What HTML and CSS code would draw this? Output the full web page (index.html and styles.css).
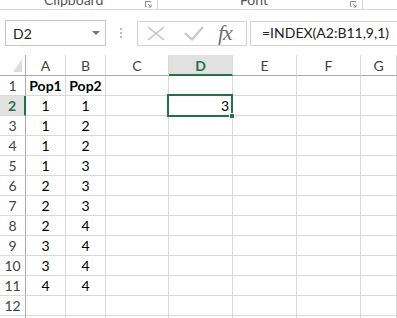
FILE: index.html
```html
<!DOCTYPE html>
<html>
<head>
<meta charset="utf-8">
<link rel="stylesheet" href="styles.css">
</head>
<body>
<div class="ribbon">
  <div class="group g1"><span class="glabel">Clipboard</span><span class="launch"><svg width="7" height="7" viewBox="0 0 7 7"><path d="M0.5 0.5H5.5V1.5M0.5 0.5V5.5H1.5M3 3L6 6M6 3.5V6H3.5" fill="none" stroke="#888" stroke-width="1"/></svg></span></div>
  <div class="group g2"><span class="glabel">Font</span><span class="launch"><svg width="7" height="7" viewBox="0 0 7 7"><path d="M0.5 0.5H5.5V1.5M0.5 0.5V5.5H1.5M3 3L6 6M6 3.5V6H3.5" fill="none" stroke="#888" stroke-width="1"/></svg></span></div>
</div>
<div class="fbar">
  <div class="namebox"><span class="nbtext">D2</span><svg class="nbarrow" width="8" height="4" viewBox="0 0 8 4"><path d="M0 0H8L4 4Z" fill="#777"/></svg></div>
  <div class="dots"><i></i><i></i><i></i></div>
  <div class="fbtns">
    <svg class="ico-x" width="18" height="15" viewBox="0 0 18 15"><path d="M1 1L17 14M17 1L1 14" stroke="#c4c4c4" stroke-width="1.6" fill="none"/></svg>
    <svg class="ico-ok" width="20" height="15" viewBox="0 0 20 15"><path d="M1 7L8 13.5L19 1" stroke="#c4c4c4" stroke-width="2" fill="none"/></svg>
    <span class="fx">fx</span>
  </div>
  <div class="finput">=INDEX(A2:B11,9,1)</div>
</div>
<div class="sheet">
  <div class="c corner"><svg width="9" height="13" viewBox="0 0 9 13"><path d="M9 0V13H0Z" fill="#dcdcdc"/></svg></div>
  <div class="c ch">A</div><div class="c ch">B</div><div class="c ch">C</div><div class="c ch sel">D</div><div class="c ch">E</div><div class="c ch">F</div><div class="c ch">G</div>

  <div class="c rh">1</div><div class="c v b">Pop1</div><div class="c v b">Pop2</div><div class="c"></div><div class="c"></div><div class="c"></div><div class="c"></div><div class="c"></div>
  <div class="c rh sel">2</div><div class="c v">1</div><div class="c v">1</div><div class="c"></div><div class="c r act">3<span class="selbox"><span class="handle"></span></span></div><div class="c"></div><div class="c"></div><div class="c"></div>
  <div class="c rh">3</div><div class="c v">1</div><div class="c v">2</div><div class="c"></div><div class="c"></div><div class="c"></div><div class="c"></div><div class="c"></div>
  <div class="c rh">4</div><div class="c v">1</div><div class="c v">2</div><div class="c"></div><div class="c"></div><div class="c"></div><div class="c"></div><div class="c"></div>
  <div class="c rh">5</div><div class="c v">1</div><div class="c v">3</div><div class="c"></div><div class="c"></div><div class="c"></div><div class="c"></div><div class="c"></div>
  <div class="c rh">6</div><div class="c v">2</div><div class="c v">3</div><div class="c"></div><div class="c"></div><div class="c"></div><div class="c"></div><div class="c"></div>
  <div class="c rh">7</div><div class="c v">2</div><div class="c v">3</div><div class="c"></div><div class="c"></div><div class="c"></div><div class="c"></div><div class="c"></div>
  <div class="c rh">8</div><div class="c v">2</div><div class="c v">4</div><div class="c"></div><div class="c"></div><div class="c"></div><div class="c"></div><div class="c"></div>
  <div class="c rh">9</div><div class="c v">3</div><div class="c v">4</div><div class="c"></div><div class="c"></div><div class="c"></div><div class="c"></div><div class="c"></div>
  <div class="c rh">10</div><div class="c v">3</div><div class="c v">4</div><div class="c"></div><div class="c"></div><div class="c"></div><div class="c"></div><div class="c"></div>
  <div class="c rh">11</div><div class="c v">4</div><div class="c v">4</div><div class="c"></div><div class="c"></div><div class="c"></div><div class="c"></div><div class="c"></div>
  <div class="c rh">12</div><div class="c"></div><div class="c"></div><div class="c"></div><div class="c"></div><div class="c"></div><div class="c"></div><div class="c"></div>
  <div class="e rh"></div><div class="e"></div><div class="e"></div><div class="e"></div><div class="e"></div><div class="e"></div><div class="e"></div><div class="e"></div>
</div>
</body>
</html>
```
FILE: styles.css
```css
* { box-sizing: border-box; }
html, body { margin: 0; padding: 0; background: #fff; }
body {
  width: 397px; height: 318px; overflow: hidden;
  font-family: Lato, "Open Sans", sans-serif;
  color: #000;
}
.ribbon {
  display: flex;
  height: 10px;
  border-bottom: 1px solid #d8d8d8;
  overflow: hidden;
}
.group {
  position: relative;
  display: flex;
  border-right: 1px solid #d8d8d8;
  height: 9px;
}
.g1 { width: 158px; }
.g2 { width: 205px; }
.glabel {
  font-size: 14px; color: #555; line-height: 14px;
  margin-top: -7px;
}
.g1 .glabel { margin-left: 44px; }
.g2 .glabel { margin-left: 82px; }
.launch { margin-left: auto; margin-right: 5px; margin-top: 1px; display: flex; }

.fbar {
  display: flex;
  align-items: flex-start;
  height: 45px;
  padding-top: 10px;
}
.namebox {
  display: flex; align-items: center;
  margin-left: 5px;
  width: 101px; height: 26px;
  border: 1px solid #c6c6c6;
  padding: 0 5px 0 7px;
}
.nbtext { font-size: 14px; color: #222; }
.nbarrow { margin-left: auto; }
.dots {
  width: 3px; margin-left: 14px; margin-top: 8px;
  display: flex; flex-direction: column; gap: 2px;
}
.dots i { display: block; width: 2px; height: 2px; background: #bbb; }
.fbtns {
  display: flex; align-items: center;
  margin-left: 14px; margin-top: 1px;
  width: 110px; height: 25px;
  border: 1px solid #d4d4d4;
  padding-left: 9px;
}
.ico-x { margin-right: 19px; }
.ico-ok { margin-right: 14px; }
.fx {
  font-family: "Liberation Serif", serif; font-style: italic;
  font-size: 22px; color: #707070; letter-spacing: -1px;
  line-height: 20px; margin-top: -2px;
}
.finput {
  margin-left: 3px; margin-top: 1px;
  flex: 1; height: 25px;
  border: 1px solid #d4d4d4; border-right: none;
  font-size: 14px; color: #222;
  padding-left: 11px; line-height: 22px;
}

.sheet {
  display: grid;
  grid-template-columns: 26px 40px 40px 63px 64px 64px 64px 1fr;
  grid-template-rows: 21px repeat(12, 20px) 2px;
}
.c {
  border-right: 1px solid #d9d9d9;
  border-bottom: 1px solid #d9d9d9;
  font-size: 14px;
  line-height: 20px;
  white-space: nowrap;
}
.e { border-right: 1px solid #d9d9d9; }
.e.rh { border-right: 1px solid #ababab; }
.corner {
  border-bottom: 1px solid #ababab;
  border-right: 1px solid #ababab;
  display: flex; align-items: flex-end; justify-content: flex-end;
  padding: 0 3px 3px 0;
}
.ch {
  text-align: center; color: #444;
  border-bottom: 1px solid #ababab;
  line-height: 21px;
}
.ch.sel {
  background: #e1e1e1; color: #217346; font-weight: bold;
  border-bottom: 2px solid #217346;
}
.rh {
  text-align: center; color: #444;
  border-right: 1px solid #ababab;
}
.rh.sel {
  background: #e1e1e1; color: #217346; font-weight: bold;
  border-right: 2px solid #217346;
}
.v { text-align: center; }
.b { font-weight: bold; }
.r { text-align: right; padding-right: 3px; }
.act { position: relative; }
.selbox {
  position: absolute;
  left: -2px; top: -2px; right: -1px; bottom: -2px;
  border: 2px solid #217346;
}
.handle {
  position: absolute;
  right: -4px; bottom: -4px;
  width: 6px; height: 6px;
  background: #217346; border: 1px solid #fff;
}
```
